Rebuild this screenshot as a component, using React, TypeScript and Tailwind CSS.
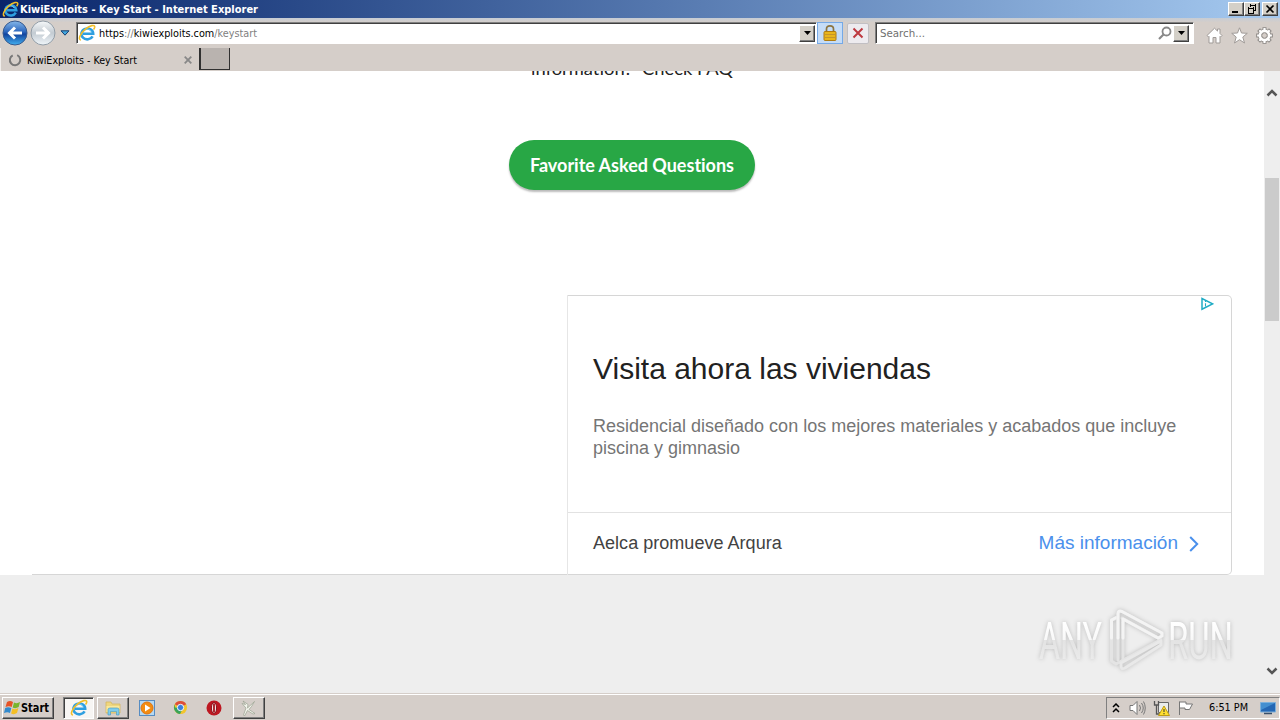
import type { ReactNode } from "react";

const raised = "border border-t-white border-l-white border-r-[#404040] border-b-[#404040] shadow-[inset_-1px_-1px_0_#808080]";
const sunken = "border border-t-[#808080] border-l-[#808080] border-r-white border-b-white shadow-[inset_1px_1px_0_#404040]";

function IeLogo({ className }: { className: string }) {
  return (
    <svg viewBox="0 0 18 18" className={className} fill="none">
      <path d="M14.6 12.3A5.9 5.4 0 1 1 15.2 9.8H5" stroke="#2f9fe0" strokeWidth="2.6" />
      <path d="M5.2 7.8C6.4 4.2 11.8 4.2 13 7.6" stroke="#7fd2f7" strokeWidth="1" />
      <path d="M3 16C-.3 15.8 2 9.7 7.1 5.4C11.5 1.4 17.3 .1 16.7 3.2C16.4 4.3 16 5 15.5 5.5" stroke="#f2be27" strokeWidth="1.6" />
    </svg>
  );
}

function DropButton() {
  return (
    <div className={`flex h-[17px] w-4 shrink-0 items-center justify-center bg-[#d4d0c8] ${raised}`}>
      <svg viewBox="0 0 7 4" className="h-1 w-[7px]">
        <path d="M0 0H7L3.5 4Z" fill="#000" />
      </svg>
    </div>
  );
}

function ArrowCircle({ back }: { back?: boolean }) {
  return (
    <svg viewBox="0 0 26 26" className="h-[26px] w-[26px] shrink-0">
      <defs>
        <linearGradient id="backFill" x1="0" y1="0" x2="0" y2="1">
          <stop offset="0" stopColor="#86b8ea" />
          <stop offset=".45" stopColor="#2c66bd" />
          <stop offset=".55" stopColor="#12449e" />
          <stop offset="1" stopColor="#43b1f1" />
        </linearGradient>
        <linearGradient id="forwardFill" x1="0" y1="0" x2="0" y2="1">
          <stop offset="0" stopColor="#f7f9fa" />
          <stop offset=".5" stopColor="#c3cbd2" />
          <stop offset="1" stopColor="#f0f6fa" />
        </linearGradient>
      </defs>
      <circle cx="13" cy="13" r="12" fill={back ? "url(#backFill)" : "url(#forwardFill)"} stroke={back ? "#37598d" : "#929da7"} />
      <path
        d={back ? "M20 13H8M13 7.5L7.5 13L13 18.5" : "M6 13H18M13 7.5L18.5 13L13 18.5"}
        fill="none"
        stroke="#fff"
        strokeWidth="3"
      />
    </svg>
  );
}

function WindowButton({ children }: { children: ReactNode }) {
  return (
    <div className={`h-[14px] w-4 bg-[#d4d0c8] ${raised}`}>
      <svg viewBox="0 0 14 12" className="h-3 w-[14px]" fill="none" stroke="#000" shapeRendering="crispEdges">
        {children}
      </svg>
    </div>
  );
}

function TitleBar() {
  return (
    <div className="flex h-[18px] items-center bg-linear-to-r from-[#0a246a] to-[#a6caf0] px-[2px]">
      <IeLogo className="h-[17px] w-[17px] shrink-0" />
      <svg viewBox="0 0 241 18" className="h-[18px] w-[241px] font-bold">
        <text x="1" y="13" fill="#fff" textLength="238" lengthAdjust="spacingAndGlyphs">
          KiwiExploits - Key Start - Internet Explorer
        </text>
      </svg>
      <div className="ml-auto flex">
        <WindowButton>
          <path d="M3 9H9" strokeWidth="2" />
        </WindowButton>
        <WindowButton>
          <path d="M5 2H11M5.5 1V4M10.5 1V7.5H8M3 5H9M3.5 4V10.5H8.5V4" />
        </WindowButton>
        <div className="w-[2px]" />
        <WindowButton>
          <path d="M3.5 2.5L10.5 9.5M10.5 2.5L3.5 9.5" strokeWidth="1.7" shapeRendering="auto" />
        </WindowButton>
      </div>
    </div>
  );
}

function Toolbar() {
  return (
    <div className="flex h-[30px] items-center bg-linear-to-b from-[#c6ccd5] via-[#d5cec9] via-15% to-[#d5cec9] pr-[7px] pl-[2px]">
      <ArrowCircle back />
      <div className="w-[2px]" />
      <ArrowCircle />
      <svg viewBox="0 0 10 6" className="ml-[4px] h-[6px] w-[10px]">
        <path d="M1 .8H9L5 5.2Z" fill="#42a8e0" stroke="#173f70" />
      </svg>
      <div className={`ml-[6px] flex h-[22px] w-[741px] items-center bg-white pr-px pl-px ${sunken}`}>
        <IeLogo className="h-[18px] w-[18px] shrink-0" />
        <svg viewBox="0 0 162 18" className="ml-[3px] h-[18px] w-[162px]">
          <text x="0" y="13" textLength="158" lengthAdjust="spacingAndGlyphs" fill="#000">
            https<tspan fill="#808080">://</tspan>kiwiexploits.com<tspan fill="#808080">/keystart</tspan>
          </text>
        </svg>
        <div className="ml-auto">
          <DropButton />
        </div>
      </div>
      <div className="flex h-[22px] w-[26px] items-center justify-center border border-[#75a9e7] bg-[#c5dcf7]">
        <svg viewBox="0 0 16 18" className="h-[18px] w-4">
          <path d="M4.5 8V5Q4.5 1.8 8 1.8T11.5 5V8" fill="none" stroke="#8c7440" strokeWidth="1.7" />
          <rect x="2" y="7.5" width="12" height="9" rx="1" fill="#e8b51c" stroke="#ae7b12" />
          <path d="M2.5 10.5H13.5M2.5 13.5H13.5" stroke="#c5952a" />
        </svg>
      </div>
      <div className="ml-[4px] flex h-[21px] w-[22px] items-center justify-center rounded-[2px] border border-[#c1bfc3] bg-[#edebef]">
        <svg viewBox="0 0 12 12" className="h-3 w-3">
          <path d="M1.5 1.5L10.5 10.5M10.5 1.5L1.5 10.5" stroke="#bd3940" strokeWidth="2" />
        </svg>
      </div>
      <div className={`ml-[6px] flex h-[22px] w-[319px] items-center bg-white pr-[4px] pl-[4px] ${sunken}`}>
        <svg viewBox="0 0 48 18" className="h-[18px] w-12">
          <text x="0" y="13" textLength="45" lengthAdjust="spacingAndGlyphs" fill="#707070">
            Search...
          </text>
        </svg>
        <svg viewBox="0 0 14 14" className="mr-px ml-auto h-[14px] w-[14px]" fill="none" stroke="#888">
          <circle cx="8.5" cy="5.5" r="4" strokeWidth="1.8" />
          <path d="M5.5 8.5L1 13" strokeWidth="2.2" />
        </svg>
        <DropButton />
      </div>
      <div className="ml-auto flex gap-[8px] pt-[4px]">
        <svg viewBox="0 0 17 17" className="h-[17px] w-[17px]" fill="#fff" stroke="#a09b98">
          <path d="M1 8.5L8.5 1.2L11.5 4.1V2H14V6.5L16 8.5L14.5 10L14 9.5V16H10V10.5H7V16H3V9.5L2.5 10Z" />
        </svg>
        <svg viewBox="0 0 17 17" className="h-[17px] w-[17px]" fill="#fff" stroke="#a09b98">
          <path d="M8.5 .8L10.5 6L16.3 6.3L11.8 10L13.5 16L8.5 12.7L3.5 16L5.2 10L.7 6.3L6.5 6Z" />
        </svg>
        <svg viewBox="0 0 17 17" className="h-[17px] w-[17px]" fill="none">
          <g stroke="#8b8784" strokeWidth="4">
            <path d="M8.5 .2V16.8M.2 8.5H16.8M2.6 2.6L14.4 14.4M14.4 2.6L2.6 14.4" />
            <circle cx="8.5" cy="8.5" r="4.6" />
          </g>
          <g stroke="#fff" strokeWidth="2.2">
            <path d="M8.5 1.1V15.9M1.1 8.5H15.9M3.3 3.3L13.7 13.7M13.7 3.3L3.3 13.7" />
            <circle cx="8.5" cy="8.5" r="4.7" strokeWidth="2.5" />
          </g>
          <circle cx="8.5" cy="8.5" r="2.8" fill="#d5cec9" stroke="#8b8784" />
        </svg>
      </div>
    </div>
  );
}

function TabStrip() {
  return (
    <div className="flex h-[23px] bg-[#d5cec9]">
      <div className="flex h-full w-[199px] items-center border-l border-[#f2efec] pl-[7px]">
        <svg viewBox="0 0 14 14" className="h-[14px] w-[14px]" fill="none" stroke="#777">
          <path d="M9.2 2.2A5.2 5.2 0 1 1 4.7 2.3" strokeWidth="2" />
        </svg>
        <svg viewBox="0 0 114 20" className="ml-[5px] h-5 w-[114px]">
          <text x="0" y="14" textLength="110" lengthAdjust="spacingAndGlyphs" fill="#000">
            KiwiExploits - Key Start
          </text>
        </svg>
        <svg viewBox="0 0 8 8" className="mr-[7px] ml-auto h-2 w-2" stroke="#888" strokeWidth="1.8">
          <path d="M.7 .7L7.3 7.3M7.3 .7L.7 7.3" />
        </svg>
      </div>
      <div className="h-[22px] w-[31px] border-r border-b border-l-2 border-[#303030] bg-[#b9b3af]" />
    </div>
  );
}

function AdCard() {
  return (
    <div className="ml-[567px] flex h-[280px] w-[665px] flex-col rounded-r-[5px] border border-[#d6d6d6] border-l-[#e6e6e6] font-['Liberation_Sans',Arial,sans-serif]">
      <div className="flex h-[217px] flex-col border-b border-[#e2e2e2] pl-[25px]">
        <svg viewBox="0 0 14 14" className="mt-px mr-[17px] h-[14px] w-[14px] self-end" fill="none" stroke="#20acc5">
          <path d="M2 1.5V12.2L12.6 6.8Z" strokeWidth="1.5" />
          <path d="M5.5 4V5M5.5 6.2V9.5" strokeWidth="1.1" />
        </svg>
        <h1 className="mt-[39px] text-[30px] leading-[38px] whitespace-nowrap text-[#212121]">Visita ahora las viviendas</h1>
        <p className="mt-[27px] text-[18px] leading-[22px] whitespace-nowrap text-[#757575]">
          Residencial diseñado con los mejores materiales y acabados que incluye
          <br />
          piscina y gimnasio
        </p>
      </div>
      <div className="flex flex-1 items-center justify-between pr-[32px] pl-[25px]">
        <span className="text-[18px] tracking-[0.03px] text-[#424242]">Aelca promueve Arqura</span>
        <span className="flex items-center text-[19px] text-[#4a90ec]">
          Más información
          <svg viewBox="0 0 10 16" className="ml-[11px] h-4 w-[10px]" fill="none" stroke="currentColor" strokeWidth="2">
            <path d="M1.2 1L8.2 8L1.2 15" />
          </svg>
        </span>
      </div>
    </div>
  );
}

function Scrollbar() {
  return (
    <div className="flex w-4 flex-col items-center bg-[#eee]">
      <svg viewBox="0 0 12 8" className="mt-[18px] h-2 w-3" fill="none" stroke="#555" strokeWidth="2.5">
        <path d="M1.5 6.5L6 2L10.5 6.5" />
      </svg>
      <div className="mt-[81px] h-[143px] w-[14px] bg-[#cbcbcb]" />
      <svg viewBox="0 0 12 8" className="mt-auto mb-[18px] h-2 w-3" fill="none" stroke="#555" strokeWidth="2.5">
        <path d="M1.5 1.5L6 6L10.5 1.5" />
      </svg>
    </div>
  );
}

function Watermark() {
  return (
    <svg viewBox="0 0 214 80" className="absolute top-[600px] left-[1030px] h-[80px] w-[214px] drop-shadow-[0_0_2px_#bbb]">
      <defs>
        <linearGradient id="letterFill" gradientUnits="userSpaceOnUse" x1="0" y1="22" x2="0" y2="60">
          <stop offset="0" stopColor="#fff" />
          <stop offset=".47" stopColor="#f8f8f8" />
          <stop offset=".48" stopColor="#e3e3e3" />
          <stop offset="1" stopColor="#ebebeb" />
        </linearGradient>
      </defs>
      <g fill="url(#letterFill)" className="font-[Roboto,sans-serif] text-[51px]">
        <text x="9" y="59" textLength="63" lengthAdjust="spacingAndGlyphs">ANY</text>
        <text x="138" y="59" textLength="65" lengthAdjust="spacingAndGlyphs">RUN</text>
      </g>
      <g fill="none" stroke="#f4f4f4" strokeWidth="3" strokeLinejoin="round" strokeLinecap="round">
        <path d="M87 18L81.5 20V61L86 64L131 39.5L92 18" stroke="#e4e4e4" />
        <path d="M86 17.5L81.5 20V38" />
        <path d="M88 60V14Q88 10 92 11.5L132 33V36L128 38L93 19V60" stroke="#e4e4e4" />
        <path d="M88 38V14Q88 10 92 11.5L132 33V36L128 38L93 19V38" />
        <path d="M91 63L131 41V45L95 68Q91 70 91 66Z" stroke="#e9e9e9" />
      </g>
    </svg>
  );
}

function Page() {
  return (
    <div className="flex min-h-0 flex-1">
      <main className="flex flex-1 flex-col overflow-hidden bg-[#eee]">
        <div className="flex h-[504px] flex-col bg-white">
          <div className="flex h-[69px] justify-center overflow-hidden">
            <svg viewBox="0 0 206 20" className="h-5 w-[206px]">
              <text x="2" y="4" textLength="202" lengthAdjust="spacingAndGlyphs" fill="#222" className="font-[Lato,sans-serif] text-[18px]">
                information?&nbsp; Check FAQ
              </text>
            </svg>
          </div>
          <button className="h-[50px] w-[246px] self-center rounded-full bg-[#28a745] font-[Lato,sans-serif] text-[18px] font-bold shadow-[0_2px_2px_#bbb] [font-variant-ligatures:none]">
            <svg viewBox="0 0 206 26" className="mx-auto h-[26px] w-[206px]">
              <text x="1" y="20" textLength="204" lengthAdjust="spacing" fill="#fff">
                Favorite Asked Questions
              </text>
            </svg>
          </button>
          <div className="mt-[105px] flex items-end">
            <div className="-mr-[567px] ml-[32px] w-[535px] border-b border-[#d6d6d6]" />
            <AdCard />
          </div>
        </div>
      </main>
      <Scrollbar />
    </div>
  );
}

function Taskbar() {
  return (
    <footer className="flex h-[27px] items-center border-t border-[#d5cec9] bg-[#d5cec9] pt-px shadow-[inset_0_1px_0_#fff]">
      <div className={`ml-[2px] flex h-[22px] w-[52px] items-center pl-px ${raised}`}>
        <svg viewBox="0 0 17 17" className="h-[17px] w-[17px]">
          <path d="M3 3Q6 1 9 3L7.7 8Q5 6.5 1.5 8Z" fill="#e65326" />
          <path d="M10 3.5Q13 5 16 3L14.7 8Q11.5 10 8.7 8.5Z" fill="#79b52d" />
          <path d="M1.2 9Q4 7.5 7.3 9L6 14Q3.5 12.5 0 14Z" fill="#328acd" />
          <path d="M8.4 9.5Q11.5 11 14.4 9L13 14Q10 16 7.1 14.5Z" fill="#f4bf25" />
        </svg>
        <svg viewBox="0 0 30 18" className="h-[18px] w-[30px] text-[12px] font-bold">
          <text x="0" y="13" textLength="28" lengthAdjust="spacingAndGlyphs">Start</text>
        </svg>
      </div>
      <div className={`ml-[9px] flex h-[22px] w-[31px] items-center justify-center bg-[#f7f5f3] ${sunken}`}>
        <IeLogo className="h-[18px] w-[18px]" />
      </div>
      <div className={`ml-[3px] flex h-[22px] w-[32px] items-center justify-center ${raised}`}>
        <svg viewBox="0 0 18 16" className="h-4 w-[18px]">
          <path d="M2 2H7L8 4H16V13H2Z" fill="#efd67e" stroke="#d5b75f" strokeWidth=".8" />
          <path d="M2.5 6H15.5V12H2.5Z" fill="#fae99c" />
          <path d="M4 15V9.5Q4 8 6 8H13Q15 8 15 9.5V15H12.5V11.5H6.5V15Z" fill="#7fcdec" stroke="#4296bd" strokeWidth=".6" />
        </svg>
      </div>
      <svg viewBox="0 0 16 16" className="ml-[10px] h-4 w-4">
        <rect x=".5" y=".5" width="15" height="15" fill="#b5d9f3" stroke="#568cc2" />
        <circle cx="8" cy="8" r="6" fill="#f28c12" stroke="#df7412" />
        <path d="M6 4.5V11.5L11.5 8Z" fill="#fff" />
      </svg>
      <svg viewBox="0 0 16 16" className="ml-[18px] h-[15px] w-[15px]">
        <circle cx="8" cy="8" r="7" fill="#f2c52d" />
        <path d="M8 8L1.94 4.5A7 7 0 0 1 14.06 4.5Z" fill="#dd4d3b" />
        <path d="M8 8H2L1.94 4.5A7 7 0 0 0 7.5 15L10 10Z" fill="#3aa45b" />
        <circle cx="8" cy="8" r="3.4" fill="#3980dd" stroke="#fff" />
      </svg>
      <svg viewBox="0 0 16 16" className="ml-[18px] h-4 w-4">
        <circle cx="8" cy="8" r="7.5" fill="#bd1721" />
        <ellipse cx="8" cy="8" rx="2.6" ry="5.5" fill="#f5e2e2" stroke="#8b1119" />
        <path d="M8 3.5V12.5" stroke="#a3131c" strokeWidth="1.8" />
      </svg>
      <div className={`ml-[11px] flex h-[22px] w-[32px] items-center justify-center ${raised}`}>
        <svg viewBox="0 0 18 18" className="h-[18px] w-[18px]" fill="#f3f4ec" stroke="#98a08f" strokeWidth=".7">
          <path d="M3 2L8 5.5L7.5 9L14.5 2.5L11.5 7.5L9 10.5L15 14.5L13 15L7.5 11.5L4.5 17L3.5 16L6 9L2 4.5L5.5 5.5Z" />
        </svg>
      </div>
      <div className="ml-auto flex h-[22px] w-[174px] items-center border border-t-[#808080] border-r-white border-b-white border-l-[#808080] pl-[5px]">
        <svg viewBox="0 0 8 10" className="h-[10px] w-2" fill="none" stroke="#000" strokeWidth="1.5">
          <path d="M1 4L4 1L7 4M1 9L4 6L7 9" />
        </svg>
        <svg viewBox="0 0 17 16" className="ml-[9px] h-4 w-[17px]" fill="none" stroke="#777">
          <path d="M1 5.5H4L8 1.5V14.5L4 10.5H1Z" fill="#fff" />
          <path d="M10.5 5Q12.5 8 10.5 11M12.5 3Q16 8 12.5 13M14.5 1.5Q18 8 14.5 14.5" />
        </svg>
        <svg viewBox="0 0 17 16" className="ml-[7px] h-4 w-[17px]">
          <path d="M5.5 2.5H15.5V12.5H5.5Z" fill="#e9ebeb" stroke="#666" />
          <path d="M1.5 1V5H5.5V1M3.5 5V14H8" fill="none" stroke="#555" strokeWidth="1.3" />
          <path d="M11 6L16.5 15.5H5.5Z" fill="#ffdf31" stroke="#bd9b15" />
          <path d="M11 9V12M11 13V14.3" stroke="#333" />
        </svg>
        <svg viewBox="0 0 17 16" className="ml-[7px] h-4 w-[17px]" fill="#fff" stroke="#777">
          <path d="M2.5 15V1.5M2.5 2H9V4H15.5L12.5 9.5H8V8H2.5" />
        </svg>
        <svg viewBox="0 0 42 18" className="ml-[15px] h-[18px] w-[42px]">
          <text x="0" y="12" textLength="39" lengthAdjust="spacingAndGlyphs">6:51 PM</text>
        </svg>
        <svg viewBox="0 0 16 14" className="ml-[9px] h-[14px] w-4">
          <path d="M.5 1.5H15.5V11H.5Z" fill="#2467b4" stroke="#7cb0db" />
          <path d="M1 2H15L1 9Z" fill="#438fd0" />
          <path d="M4 12.5H12" stroke="#384f69" strokeWidth="1.5" />
        </svg>
      </div>
    </footer>
  );
}

export default function App() {
  return (
    <div className="relative flex h-[720px] w-[1280px] flex-col overflow-hidden bg-[#d5cec9] font-['DejaVu_Sans_Condensed','DejaVu_Sans',sans-serif] text-[11px]">
      <TitleBar />
      <Toolbar />
      <TabStrip />
      <Page />
      <Taskbar />
      <Watermark />
    </div>
  );
}
